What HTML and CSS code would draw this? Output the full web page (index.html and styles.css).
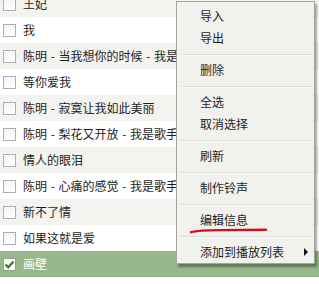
FILE: index.html
```html
<!DOCTYPE html>
<html lang="zh">
<head>
<meta charset="utf-8">
<link rel="stylesheet" href="styles.css">
</head>
<body>
<div class="list">
  <div class="row alt first"><span class="cb"></span><span class="t">王妃</span></div>
  <div class="row"><span class="cb"></span><span class="t">我</span></div>
  <div class="row alt"><span class="cb"></span><span class="t">陈明 - 当我想你的时候 - 我是歌手</span></div>
  <div class="row"><span class="cb"></span><span class="t">等你爱我</span></div>
  <div class="row alt"><span class="cb"></span><span class="t">陈明 - 寂寞让我如此美丽</span></div>
  <div class="row"><span class="cb"></span><span class="t">陈明 - 梨花又开放 - 我是歌手</span></div>
  <div class="row alt"><span class="cb"></span><span class="t">情人的眼泪</span></div>
  <div class="row"><span class="cb"></span><span class="t">陈明 - 心痛的感觉 - 我是歌手</span></div>
  <div class="row alt"><span class="cb"></span><span class="t">新不了情</span></div>
  <div class="row"><span class="cb"></span><span class="t">如果这就是爱</span></div>
  <div class="row sel"><span class="cb checked"><svg width="11" height="11" viewBox="0 0 11 11"><path d="M1.5 5.5 L4.3 8.3 L9.5 2.5" fill="none" stroke="#3d7a1c" stroke-width="2.2"/></svg></span><span class="t">画壁</span></div>
  <div class="row"><span class="cb"></span><span class="t">北京北京</span></div>
</div>

<div class="menu">
  <div class="item">导入</div>
  <div class="item">导出</div>
  <div class="sep"></div>
  <div class="item">删除</div>
  <div class="sep"></div>
  <div class="item">全选</div>
  <div class="item">取消选择</div>
  <div class="sep"></div>
  <div class="item">刷新</div>
  <div class="sep"></div>
  <div class="item">制作铃声</div>
  <div class="sep"></div>
  <div class="item">编辑信息</div>
  <div class="sep"></div>
  <div class="item sub">添加到播放列表<span class="arrow"></span></div>
  <svg class="mark" width="80" height="8" viewBox="0 0 80 8"><path d="M1 5.2 Q 8 3.2 30 3.1 L 76 2.8" fill="none" stroke="#d3101a" stroke-width="2.4" stroke-linecap="round"/></svg>
</div>
</body>
</html>
```

FILE: styles.css
```css
html, body {
  margin: 0;
  padding: 0;
  width: 319px;
  height: 284px;
  overflow: hidden;
  background: #ffffff;
  font-family: "Noto Sans CJK SC", "Microsoft YaHei", sans-serif;
  font-size: 12px;
  color: #1e1e1e;
}

.list {
  display: flex;
  flex-direction: column;
  margin-top: -9px;
}

.row {
  height: 26px;
  display: flex;
  align-items: center;
  background: #ffffff;
  white-space: nowrap;
}

.row.alt {
  background: #f3f4f0;
}

.row.sel {
  background: #98b88b;
  color: #ffffff;
}

.cb {
  flex: none;
  width: 11px;
  height: 11px;
  margin-left: 3px;
  margin-right: 7px;
  border: 1px solid #a9b0b8;
  background: linear-gradient(#f4f5f6, #ffffff);
  display: flex;
  align-items: center;
  justify-content: center;
}

.cb.checked {
  background: #ffffff;
  border-color: #8fa387;
}

.t {
  line-height: 16px;
  word-spacing: 1px;
}

.menu {
  position: absolute;
  left: 176px;
  top: 1px;
  width: 137px;
  height: 258px;
  padding-top: 3px;
  background: #f1f2ed;
  border: 1px solid #a3a4a0;
  box-shadow: 2px 3px 2px rgba(0, 0, 0, 0.35);
  display: flex;
  flex-direction: column;
}

.item {
  height: 22px;
  display: flex;
  align-items: center;
  padding-left: 23px;
  line-height: 16px;
  color: #1e1e1e;
  position: relative;
}

.sep {
  height: 10px;
  display: flex;
  align-items: center;
  margin-left: 4px;
  margin-right: 1px;
}

.sep::before {
  content: "";
  display: block;
  width: 100%;
  height: 1px;
  background: #dcddd8;
  box-shadow: 0 1px 0 #fafaf8;
}

.arrow {
  position: absolute;
  left: 127px;
  top: 7px;
  width: 0;
  height: 0;
  border-top: 4px solid transparent;
  border-bottom: 4px solid transparent;
  border-left: 4px solid #111111;
}

.mark {
  position: absolute;
  left: 13px;
  top: 225px;
}
```
